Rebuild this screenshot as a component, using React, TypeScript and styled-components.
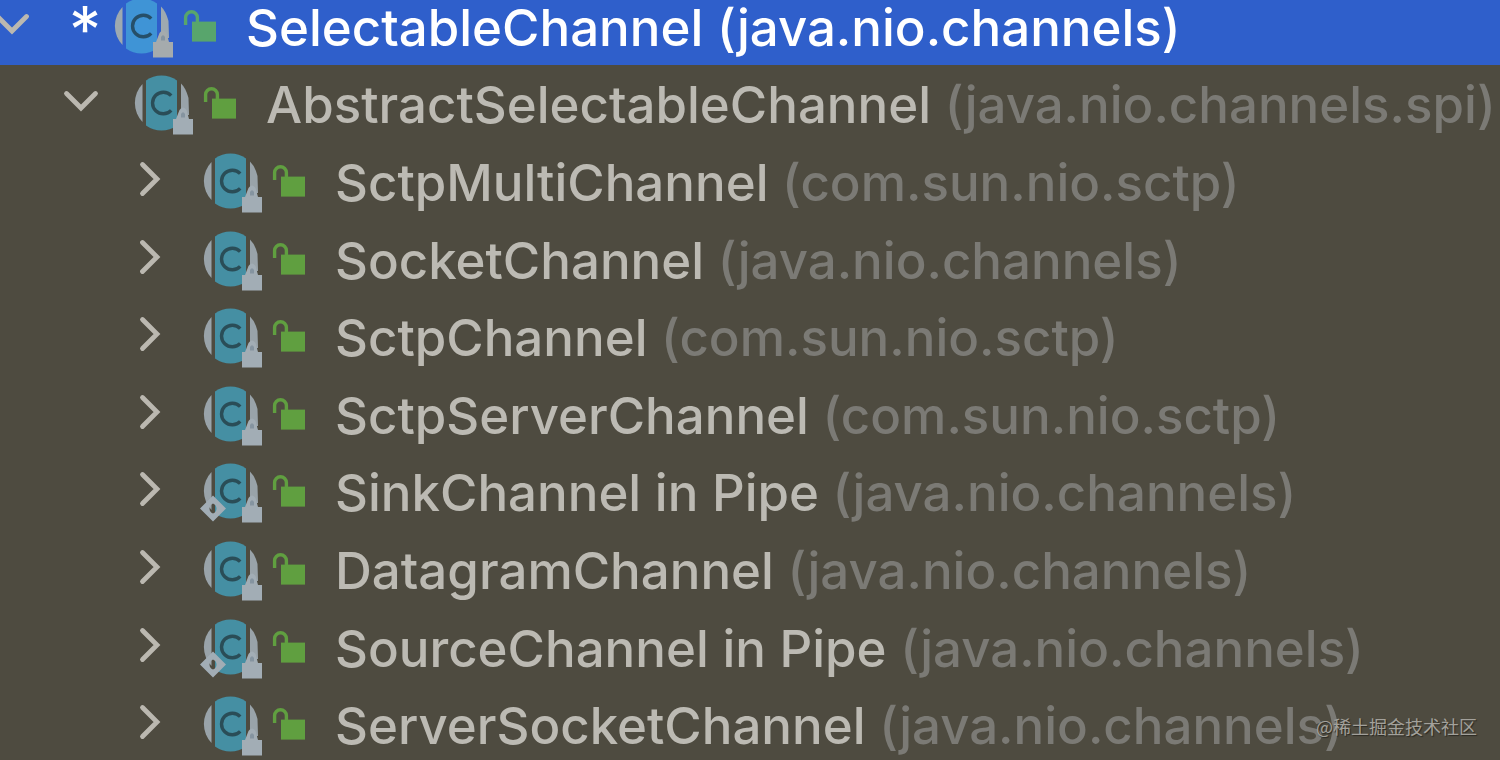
import React from "react";
import styled, { createGlobalStyle } from "styled-components";

const GlobalStyle = createGlobalStyle`
  body {
    margin: 0;
    background: #4e4b40;
    font-family: Inter, "Liberation Sans", sans-serif;
    overflow: hidden;
  }
`;

const Page = styled.main`
  position: relative;
  min-height: 100vh;
  overflow: hidden;
  background: #4e4b40;
`;

const Tree = styled.ul`
  display: grid;
  grid-auto-rows: 1fr;
  min-height: calc(100vh + 16px);
  margin: -13px 0 0 -12px;
  padding: 0;
  list-style: none;
`;

const Row = styled.li<{ $level: number; $selected: boolean }>`
  display: flex;
  align-items: center;
  padding-left: ${(p) => p.$level * 69}px;
  background: ${(p) => (p.$selected ? "#2f5fcb" : "transparent")};
  color: ${(p) => (p.$selected ? "#ffffff" : "#bcbab3")};
  white-space: nowrap;
`;

const Toggle = styled.button`
  display: flex;
  flex: none;
  align-items: center;
  justify-content: center;
  width: 48px;
  height: 48px;
  margin-right: 24px;
  padding: 0 0 4px;
  border: 0;
  background: none;
  color: #bbb8b0;
  cursor: pointer;
`;

const Star = styled.span`
  width: 48px;
  padding: 8px 0 0 1px;
  font-size: 64px;
  line-height: 52px;
  text-align: center;
`;

const Icons = styled.span`
  display: flex;
  flex: none;
  align-items: center;
  gap: 10px;
  margin: 0 29px 0 4px;
`;

const Label = styled.span`
  padding-top: 4px;
  font-size: 51px;
  font-weight: 500;
  line-height: 52px;
`;

const PackageName = styled.span<{ $selected: boolean }>`
  color: ${(p) => (p.$selected ? "#ffffff" : "#7b7a75")};
`;

const Watermark = styled.small`
  position: absolute;
  right: 23px;
  bottom: 24px;
  color: #a3a19b;
  font-family: "Noto Sans CJK SC", sans-serif;
  font-size: 18px;
  line-height: 26px;
  text-shadow: 1px 1px 1px #2b2922;
`;

function Chevron({ open }: { open: boolean }) {
  return (
    <svg width="36" height="36" viewBox="0 0 36 36" fill="none" stroke="currentColor" strokeWidth="4.8" strokeLinecap="round" aria-hidden="true">
      <path d={open ? "M3.5 10.5 L18 25 L32.5 10.5" : "M10.5 3.5 L25 18 L10.5 32.5"} />
    </svg>
  );
}

const IconFrame = styled.svg`
  overflow: visible;
`;

function ClassIcon({ selected, nested }: { selected: boolean; nested: boolean }) {
  const grey = selected ? "#9ea9b0" : "#99a3a9";
  return (
    <IconFrame width="60" height="64" viewBox="0 0 60 64" aria-hidden="true">
      <path d="M9.5 13 A27.5 27.5 0 0 0 9.5 51Z" fill={grey} />
      <path d="M48 12.4 Q53 17 55.5 27 L56 44 L48 44Z" fill={grey} />
      <path d="M13 9.5 Q20 4.5 28.5 4.5 Q37 4.5 44 9.5 V54.5 Q37 59.5 28.5 59.5 Q20 59.5 13 54.5Z" fill={selected ? "#3f94d6" : "#458fa3"} />
      <path d="M38.2 24.6 A10.8 10.8 0 1 0 38.2 39.4" fill="none" stroke={selected ? "#264f69" : "#2a4d57"} strokeWidth="3.4" />
      <path d="M40 48 H43 L46.5 39 Q48 36.5 50 36.5 Q52 36.5 53.5 39 L56 48 H60 V63.5 H40Z" fill={selected ? "#a5abad" : "#a2adb5"} />
      <path d="M48 46.5 V43 Q50 39.5 52 43 V46.5Z" fill="#8594a0" />
      {nested && (
        <path
          d="M11 36.5 L24 49.5 L11 62.5 L-2 49.5Z M11 44.5 Q7.5 46 7.5 49.5 Q7.5 53 11 54.5 Q14.5 53 14.5 49.5 Q14.5 46 11 44.5Z"
          fill="#a2adb5"
          fillRule="evenodd"
        />
      )}
    </IconFrame>
  );
}

function OpenLock({ selected }: { selected: boolean }) {
  const green = selected ? "#58a56c" : "#609f40";
  return (
    <svg width="34" height="34" viewBox="0 0 34 34" aria-hidden="true">
      <path d="M2.6 16 V8.6 A5.9 5.9 0 0 1 14.4 8.6 V14" fill="none" stroke={green} strokeWidth="3.4" />
      <rect x="9" y="12.6" width="24" height="20" fill={green} />
    </svg>
  );
}

type Item = {
  name: string;
  pkg: string;
  level: number;
  open?: boolean;
  selected?: boolean;
  nested?: boolean;
};

const items: Item[] = [
  { name: "SelectableChannel", pkg: "java.nio.channels", level: 0, open: true, selected: true },
  { name: "AbstractSelectableChannel", pkg: "java.nio.channels.spi", level: 1, open: true },
  { name: "SctpMultiChannel", pkg: "com.sun.nio.sctp", level: 2 },
  { name: "SocketChannel", pkg: "java.nio.channels", level: 2 },
  { name: "SctpChannel", pkg: "com.sun.nio.sctp", level: 2 },
  { name: "SctpServerChannel", pkg: "com.sun.nio.sctp", level: 2 },
  { name: "SinkChannel in Pipe", pkg: "java.nio.channels", level: 2, nested: true },
  { name: "DatagramChannel", pkg: "java.nio.channels", level: 2 },
  { name: "SourceChannel in Pipe", pkg: "java.nio.channels", level: 2, nested: true },
  { name: "ServerSocketChannel", pkg: "java.nio.channels", level: 2 },
];

function TreeItem({ name, pkg, level, open = false, selected = false, nested = false }: Item) {
  return (
    <Row $level={level} $selected={selected} role="treeitem" aria-level={level + 1} aria-expanded={open} aria-selected={selected}>
      <Toggle type="button" aria-label={`Toggle ${name}`}>
        <Chevron open={open} />
      </Toggle>
      {selected && <Star>*</Star>}
      <Icons>
        <ClassIcon selected={selected} nested={nested} />
        <OpenLock selected={selected} />
      </Icons>
      <Label>
        {name} <PackageName $selected={selected}>({pkg})</PackageName>
      </Label>
    </Row>
  );
}

export default function App() {
  return (
    <Page>
      <GlobalStyle />
      <Tree role="tree" aria-label="Class hierarchy">
        {items.map((item) => (
          <TreeItem key={item.name} {...item} />
        ))}
      </Tree>
      <Watermark>@稀土掘金技术社区</Watermark>
    </Page>
  );
}
